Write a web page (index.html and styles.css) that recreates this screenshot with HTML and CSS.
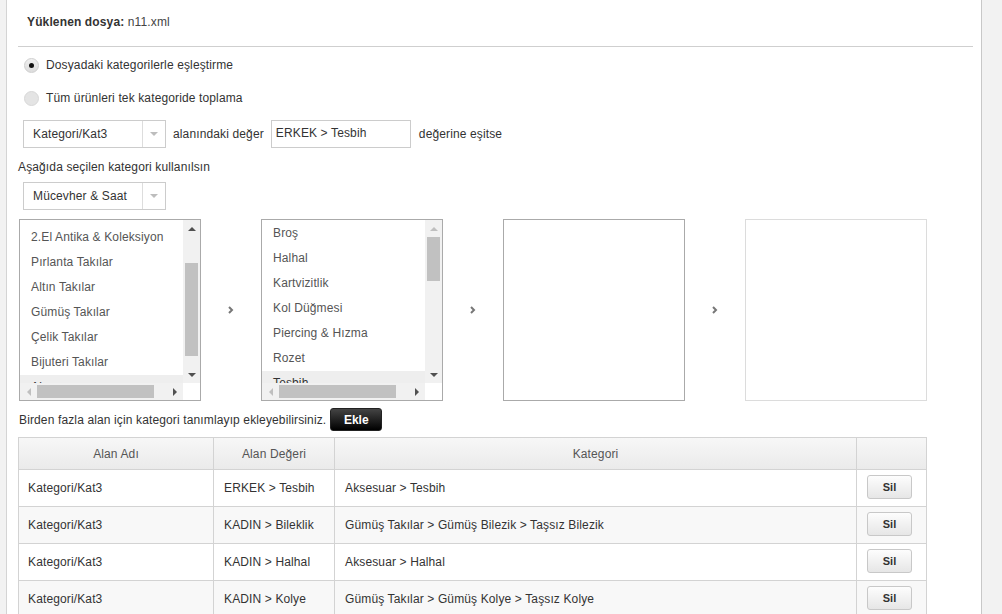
FILE: index.html
```html
<!DOCTYPE html>
<html lang="tr">
<head>
<meta charset="utf-8">
<title>Kategori eşleştirme</title>
<link rel="stylesheet" href="styles.css">
</head>
<body>
<div class="page">
  <div class="panel">
    <div class="file-info"><b>Yüklenen dosya:</b> n11.xml</div>
    <div class="divider"></div>

    <div class="radios">
      <label class="radio-row"><span class="radio checked"></span>Dosyadaki kategorilerle eşleştirme</label>
      <label class="radio-row"><span class="radio"></span>Tüm ürünleri tek kategoride toplama</label>
    </div>

    <div class="cond-row">
      <div class="select"><span class="select-text">Kategori/Kat3</span><span class="select-arrow"><span class="tri-down"></span></span></div>
      <span class="cond-label">alanındaki değer</span>
      <div class="input">ERKEK &gt; Tesbih</div>
      <span class="cond-label2">değerine eşitse</span>
    </div>

    <div class="hint">Aşağıda seçilen kategori kullanılsın</div>

    <div class="select main-cat"><span class="select-text">Mücevher &amp; Saat</span><span class="select-arrow"><span class="tri-down"></span></span></div>

    <div class="lists">
      <div class="listbox">
        <div class="items first-offset">
          <div class="item">2.El Antika &amp; Koleksiyon</div>
          <div class="item">Pırlanta Takılar</div>
          <div class="item">Altın Takılar</div>
          <div class="item">Gümüş Takılar</div>
          <div class="item">Çelik Takılar</div>
          <div class="item">Bijuteri Takılar</div>
          <div class="item selected">Aksesuar</div>
        </div>
        <div class="vscroll">
          <span class="sbtn"><span class="arr-up"></span></span>
          <div class="vtrack"><div class="vthumb" style="margin-top:26px;height:93px"></div></div>
          <span class="sbtn"><span class="arr-down"></span></span>
        </div>
        <div class="hscroll">
          <span class="sbtn"><span class="arr-left off"></span></span>
          <div class="htrack"><div class="hthumb" style="margin-left:0;width:117px"></div></div>
          <span class="sbtn"><span class="arr-right"></span></span>
        </div>
        <div class="corner"></div>
      </div>

      <div class="chev"><svg width="6" height="8" viewBox="0 0 6 8"><polyline points="1,1 4,4 1,7" fill="none" stroke="#777" stroke-width="2"/></svg></div>

      <div class="listbox">
        <div class="items second-offset">
          <div class="item">Broş</div>
          <div class="item">Halhal</div>
          <div class="item">Kartvizitlik</div>
          <div class="item">Kol Düğmesi</div>
          <div class="item">Piercing &amp; Hızma</div>
          <div class="item">Rozet</div>
          <div class="item selected">Tesbih</div>
        </div>
        <div class="vscroll">
          <span class="sbtn"><span class="arr-up off"></span></span>
          <div class="vtrack"><div class="vthumb" style="margin-top:0;height:44px"></div></div>
          <span class="sbtn"><span class="arr-down"></span></span>
        </div>
        <div class="hscroll">
          <span class="sbtn"><span class="arr-left off"></span></span>
          <div class="htrack"><div class="hthumb" style="margin-left:0;width:117px"></div></div>
          <span class="sbtn"><span class="arr-right"></span></span>
        </div>
        <div class="corner"></div>
      </div>

      <div class="chev"><svg width="6" height="8" viewBox="0 0 6 8"><polyline points="1,1 4,4 1,7" fill="none" stroke="#777" stroke-width="2"/></svg></div>

      <div class="listbox empty"></div>

      <div class="chev"><svg width="6" height="8" viewBox="0 0 6 8"><polyline points="1,1 4,4 1,7" fill="none" stroke="#777" stroke-width="2"/></svg></div>

      <div class="listbox empty disabled"></div>
    </div>

    <div class="add-row">
      <span>Birden fazla alan için kategori tanımlayıp ekleyebilirsiniz.</span>
      <button class="btn-black">Ekle</button>
    </div>

    <div class="dtable">
      <div class="tr th">
        <div class="cell center">Alan Adı</div>
        <div class="cell center">Alan Değeri</div>
        <div class="cell center">Kategori</div>
        <div class="cell"></div>
      </div>
      <div class="tr">
        <div class="cell">Kategori/Kat3</div>
        <div class="cell">ERKEK &gt; Tesbih</div>
        <div class="cell">Aksesuar &gt; Tesbih</div>
        <div class="cell"><button class="btn-sil">Sil</button></div>
      </div>
      <div class="tr alt">
        <div class="cell">Kategori/Kat3</div>
        <div class="cell">KADIN &gt; Bileklik</div>
        <div class="cell">Gümüş Takılar &gt; Gümüş Bilezik &gt; Taşsız Bilezik</div>
        <div class="cell"><button class="btn-sil">Sil</button></div>
      </div>
      <div class="tr">
        <div class="cell">Kategori/Kat3</div>
        <div class="cell">KADIN &gt; Halhal</div>
        <div class="cell">Aksesuar &gt; Halhal</div>
        <div class="cell"><button class="btn-sil">Sil</button></div>
      </div>
      <div class="tr alt">
        <div class="cell">Kategori/Kat3</div>
        <div class="cell">KADIN &gt; Kolye</div>
        <div class="cell">Gümüş Takılar &gt; Gümüş Kolye &gt; Taşsız Kolye</div>
        <div class="cell"><button class="btn-sil">Sil</button></div>
      </div>
    </div>
  </div>
</div>
</body>
</html>
```

FILE: styles.css
```css
* { box-sizing: border-box; }
html, body { margin: 0; padding: 0; overflow: hidden; height: 100%; }
body {
  background: #f2f2f2;
  font-family: "Liberation Sans", Arial, sans-serif;
  font-size: 12px;
  letter-spacing: 0.13px;
  color: #333;
}
.page { display: flex; padding-left: 6px; height: 100%; }
.panel {
  width: 976px;
  min-height: 100%;
  background: #fff;
  border-left: 1px solid #d4d4d4;
  border-right: 1px solid #c8c8c8;
  padding: 0 8px 0 11px;
}
.file-info { padding: 14px 0 0 9px; line-height: 16px; color: #444; }
.file-info b { color: #333; }
.divider { margin-top: 16px; height: 1px; background: #cfcfcf; }

.radios { margin-top: 8px; display: flex; flex-direction: column; gap: 13px; }
.radio-row { display: flex; align-items: center; height: 20px; padding-left: 6px; color: #333; }
.radio {
  width: 15px; height: 15px; border-radius: 50%;
  background: #e4e4e4; border: 1px solid #d8d8d8;
  margin-right: 7px; display: flex; align-items: center; justify-content: center;
}
.radio.checked { background: linear-gradient(#f0f0f0, #dcdcdc); border-color: #cfcfcf; }
.radio.checked::after { content: ""; width: 5px; height: 5px; border-radius: 50%; background: #111; }

.cond-row { margin-top: 12px; display: flex; align-items: center; padding-left: 5px; height: 28px; }
.select {
  display: flex; width: 143px; height: 28px;
  border: 1px solid #ccc; background: #fff;
}
.select-text { flex: 1; padding-left: 9px; line-height: 26px; color: #333; }
.select-arrow {
  width: 23px; border-left: 1px solid #ddd;
  display: flex; align-items: center; justify-content: center;
}
.tri-down { width: 0; height: 0; border-left: 4px solid transparent; border-right: 4px solid transparent; border-top: 4px solid #bdbdbd; }
.cond-label { margin-left: 7px; }
.input {
  margin-left: 7px; width: 140px; height: 28px;
  border: 1px solid #ccc; padding: 4px 0 0 4px; line-height: 16px; color: #333;
}
.cond-label2 { margin-left: 8px; }

.hint { margin-top: 11px; line-height: 16px; }
.main-cat { margin-top: 7px; margin-left: 5px; }

.lists { margin-top: 9px; margin-left: 1px; display: flex; align-items: center; }
.listbox {
  width: 182px; height: 182px; border: 1px solid #aaa; background: #fff;
  display: grid; grid-template-columns: 163px 17px; grid-template-rows: 163px 17px;
}
.listbox.empty { display: block; }
.listbox.disabled { border-color: #dcdcdc; }
.chev { width: 60px; display: flex; justify-content: center; align-items: center; }
.items { overflow: hidden; color: #555; }
.first-offset { padding-top: 5px; }
.second-offset { padding-top: 1px; }
.item { height: 25px; line-height: 25px; padding-left: 11px; white-space: nowrap; }
.item.selected { background: #eee; color: #333; }

.vscroll { background: #f1f1f1; display: flex; flex-direction: column; }
.hscroll { background: #f1f1f1; display: flex; }
.corner { background: #fff; }
.sbtn { width: 17px; height: 17px; flex: none; display: flex; align-items: center; justify-content: center; }
.vtrack { flex: 1; padding: 0 2px; }
.vthumb { background: #c1c1c1; }
.htrack { flex: 1; padding: 2px 0; display: flex; }
.hthumb { background: #c1c1c1; height: 13px; }
.arr-up { width: 0; height: 0; border-left: 4px solid transparent; border-right: 4px solid transparent; border-bottom: 4px solid #505050; }
.arr-down { width: 0; height: 0; border-left: 4px solid transparent; border-right: 4px solid transparent; border-top: 4px solid #505050; }
.arr-left { width: 0; height: 0; border-top: 4px solid transparent; border-bottom: 4px solid transparent; border-right: 4px solid #505050; }
.arr-right { width: 0; height: 0; border-top: 4px solid transparent; border-bottom: 4px solid transparent; border-left: 4px solid #505050; }
.arr-up.off { border-bottom-color: #bfbfbf; }
.arr-left.off { border-right-color: #bfbfbf; }

.add-row { margin-top: 7px; margin-left: 1px; display: flex; align-items: center; height: 23px; color: #333; }
.btn-black {
  margin-left: 4px; width: 52px; height: 23px;
  border: 1px solid #222; border-radius: 3px;
  background: linear-gradient(#444, #000);
  color: #fff; font-family: inherit; font-size: 12px; font-weight: bold; padding: 0;
}

.dtable { margin-top: 6px; width: 909px; border-top: 1px solid #d3d3d3; }
.tr {
  display: grid; grid-template-columns: 195px 121px 522px 70px;
  border-left: 1px solid #d3d3d3; height: 37px;
}
.tr.th { height: 32px; background: linear-gradient(#f7f7f7, #eaeaea); color: #555; }
.tr.alt { background: #f8f8f8; }
.cell {
  border-right: 1px solid #d3d3d3; border-bottom: 1px solid #d3d3d3;
  display: flex; align-items: center; padding-left: 9px; white-space: nowrap;
}
.tr .cell:nth-child(2), .tr .cell:nth-child(3), .tr .cell:nth-child(4) { padding-left: 10px; }
.tr .cell.center { justify-content: center; padding-left: 0; }
.btn-sil {
  width: 45px; height: 24px; padding: 0;
  border: 1px solid #c8c8c8; border-radius: 3px;
  background: linear-gradient(#fdfdfd, #e6e6e6);
  color: #333; font-family: inherit; font-size: 11px; font-weight: bold;
  margin-top: -3px;
}
```
